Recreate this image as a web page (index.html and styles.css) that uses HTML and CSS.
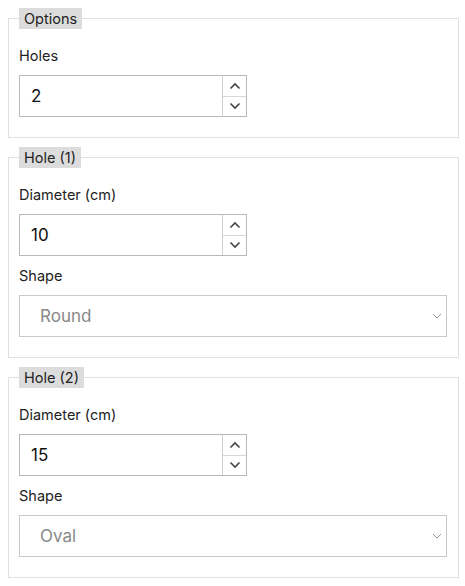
FILE: index.html
```html
<!DOCTYPE html>
<html>
<head>
<meta charset="utf-8">
<link rel="stylesheet" href="styles.css">
</head>
<body>
<form class="form">
  <fieldset class="group">
    <legend class="group-title">Options</legend>
    <div class="field">
      <label class="field-label">Holes</label>
      <div class="number">
        <input class="number-input" type="text" value="2">
        <div class="spin">
          <span class="spin-btn"><svg width="12" height="8" viewBox="0 0 12 8"><path d="M1.5 6.5L6 2l4.5 4.5" fill="none" stroke="#444" stroke-width="1.6"/></svg></span>
          <span class="spin-btn"><svg width="12" height="8" viewBox="0 0 12 8"><path d="M1.5 1.5L6 6l4.5-4.5" fill="none" stroke="#444" stroke-width="1.6"/></svg></span>
        </div>
      </div>
    </div>
  </fieldset>

  <fieldset class="group">
    <legend class="group-title">Hole (1)</legend>
    <div class="field">
      <label class="field-label">Diameter (cm)</label>
      <div class="number">
        <input class="number-input" type="text" value="10">
        <div class="spin">
          <span class="spin-btn"><svg width="12" height="8" viewBox="0 0 12 8"><path d="M1.5 6.5L6 2l4.5 4.5" fill="none" stroke="#444" stroke-width="1.6"/></svg></span>
          <span class="spin-btn"><svg width="12" height="8" viewBox="0 0 12 8"><path d="M1.5 1.5L6 6l4.5-4.5" fill="none" stroke="#444" stroke-width="1.6"/></svg></span>
        </div>
      </div>
    </div>
    <div class="field">
      <label class="field-label">Shape</label>
      <div class="select-wrap">
        <select class="select"><option>Round</option><option>Oval</option></select>
        <svg class="select-arrow" width="10" height="6" viewBox="0 0 10 6"><path d="M1 1l4 4 4-4" fill="none" stroke="#999" stroke-width="1"/></svg>
      </div>
    </div>
  </fieldset>

  <fieldset class="group">
    <legend class="group-title">Hole (2)</legend>
    <div class="field">
      <label class="field-label">Diameter (cm)</label>
      <div class="number">
        <input class="number-input" type="text" value="15">
        <div class="spin">
          <span class="spin-btn"><svg width="12" height="8" viewBox="0 0 12 8"><path d="M1.5 6.5L6 2l4.5 4.5" fill="none" stroke="#444" stroke-width="1.6"/></svg></span>
          <span class="spin-btn"><svg width="12" height="8" viewBox="0 0 12 8"><path d="M1.5 1.5L6 6l4.5-4.5" fill="none" stroke="#444" stroke-width="1.6"/></svg></span>
        </div>
      </div>
    </div>
    <div class="field">
      <label class="field-label">Shape</label>
      <div class="select-wrap">
        <select class="select"><option>Oval</option><option>Round</option></select>
        <svg class="select-arrow" width="10" height="6" viewBox="0 0 10 6"><path d="M1 1l4 4 4-4" fill="none" stroke="#999" stroke-width="1"/></svg>
      </div>
    </div>
  </fieldset>
</form>
</body>
</html>
```
FILE: styles.css
```css
html, body {
  margin: 0;
  padding: 0;
  background: #fff;
}
body {
  padding: 8px 6px 0 8px;
  font-family: Inter, "Noto Sans", sans-serif;
  color: #222;
}
.form {
  margin: 0;
}
.group {
  margin: 0 0 9px 0;
  padding: 7px 10px 20px;
  border: 1px solid #e0e0e0;
  min-width: 0;
}
.group-title {
  padding: 0 5px;
  background: #dcdcdc;
  font-size: 14.5px;
  line-height: 21px;
  height: 21px;
  color: #222;
}
.field {
  margin-top: 10px;
}
.field-label {
  display: block;
  font-size: 14.5px;
  line-height: 20px;
  margin-bottom: 9px;
  color: #222;
}
.number {
  display: flex;
  width: 228px;
  height: 42px;
  box-sizing: border-box;
  border: 1px solid #b8b8b8;
  background: #fff;
}
.number-input {
  flex: 1;
  min-width: 0;
  border: 0;
  outline: none;
  padding: 0 0 0 11px;
  margin: 0;
  font-family: Inter, "Noto Sans", sans-serif;
  font-size: 17px;
  color: #111;
  background: transparent;
}
.spin {
  width: 23px;
  display: flex;
  flex-direction: column;
  border-left: 1px solid #d0d0d0;
}
.spin-btn {
  flex: 1;
  display: flex;
  align-items: center;
  justify-content: center;
}
.spin-btn + .spin-btn {
  border-top: 1px solid #d8d8d8;
}
.select-wrap {
  position: relative;
  width: 428px;
}
.select {
  display: block;
  width: 100%;
  height: 42px;
  box-sizing: border-box;
  border: 1px solid #c8c8c8;
  border-radius: 0;
  background: #fff;
  appearance: none;
  -webkit-appearance: none;
  padding: 0 30px 0 20px;
  font-family: Inter, "Noto Sans", sans-serif;
  font-size: 17px;
  color: #888;
  outline: none;
}
.select-arrow {
  position: absolute;
  right: 5px;
  top: 18px;
  pointer-events: none;
}
```
